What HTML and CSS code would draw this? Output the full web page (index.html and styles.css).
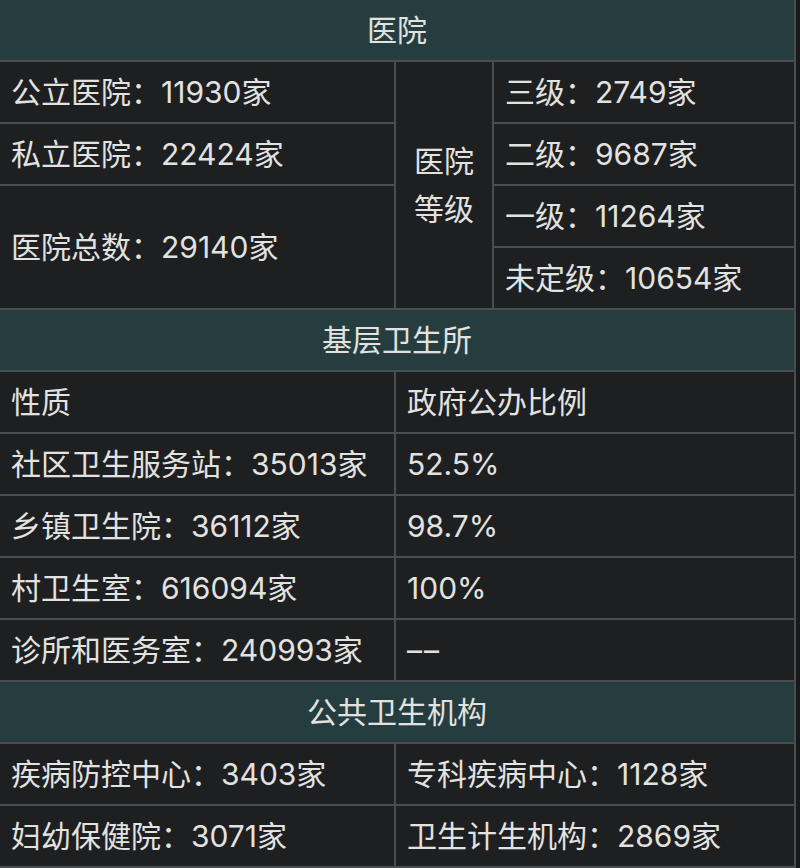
FILE: index.html
```html
<!DOCTYPE html>
<html lang="zh-CN">
<head>
<meta charset="utf-8">
<link rel="stylesheet" href="styles.css">
</head>
<body>
<div class="wrap">
<table class="stats">
  <colgroup>
    <col class="k1">
    <col class="k2">
    <col class="k3">
  </colgroup>
  <tr><th colspan="3" class="sec">医院</th></tr>
  <tr>
    <td>公立医院：11930家</td>
    <td class="mid" rowspan="4">医院等级</td>
    <td>三级：2749家</td>
  </tr>
  <tr>
    <td>私立医院：22424家</td>
    <td>二级：9687家</td>
  </tr>
  <tr>
    <td rowspan="2">医院总数：29140家</td>
    <td>一级：11264家</td>
  </tr>
  <tr>
    <td>未定级：10654家</td>
  </tr>
  <tr><th colspan="3" class="sec">基层卫生所</th></tr>
  <tr><td>性质</td><td colspan="2">政府公办比例</td></tr>
  <tr><td>社区卫生服务站：35013家</td><td colspan="2">52.5%</td></tr>
  <tr><td>乡镇卫生院：36112家</td><td colspan="2">98.7%</td></tr>
  <tr><td>村卫生室：616094家</td><td colspan="2">100%</td></tr>
  <tr><td>诊所和医务室：240993家</td><td colspan="2"><span class="dash">––</span></td></tr>
  <tr><th colspan="3" class="sec">公共卫生机构</th></tr>
  <tr><td>疾病防控中心：3403家</td><td colspan="2">专科疾病中心：1128家</td></tr>
  <tr><td>妇幼保健院：3071家</td><td colspan="2">卫生计生机构：2869家</td></tr>
</table>
</div>
</body>
</html>
```

FILE: styles.css
```css
html, body {
  margin: 0;
  padding: 0;
  background: #19191b;
}
body {
  font-family: Inter, "Noto Sans CJK SC", sans-serif;
  color: #e2e2e0;
  overflow: hidden;
}
.wrap {
  margin: -2px 0 0 -2px;
  width: 798px;
}
.stats {
  border-collapse: collapse;
  width: 798px;
  table-layout: fixed;
  font-size: 30px;
  background: #1e1f21;
}
.k1 { width: 396px; }
.k2 { width: 98px; }
.k3 { width: 302px; }
.stats th,
.stats td {
  border: 2px solid #4a4d50;
  height: 60px;
  padding: 0 11px;
  font-weight: 400;
  vertical-align: middle;
  text-align: left;
  white-space: nowrap;
  line-height: 48px;
}
.stats .sec {
  background: #263d3f;
  text-align: center;
}
.stats td.mid {
  white-space: normal;
  text-align: center;
  padding: 0 16px;
}
.dash {
  letter-spacing: 2px;
}
```
